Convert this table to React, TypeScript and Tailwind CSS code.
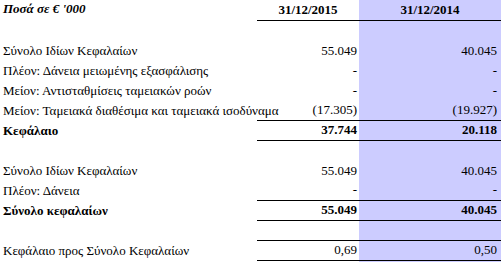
import React from 'react';

type Row = {
  label?: string;
  a?: string;
  b?: string;
  bold?: boolean;
  line?: boolean;
};

const rows: Row[] = [
  {},
  { label: 'Σύνολο Ιδίων Κεφαλαίων', a: '55.049', b: '40.045' },
  { label: 'Πλέον: Δάνεια μειωμένης εξασφάλισης', a: '-', b: '-' },
  { label: 'Μείον: Αντισταθμίσεις ταμειακών ροών', a: '-', b: '-' },
  { label: 'Μείον: Ταμειακά διαθέσιμα και ταμειακά ισοδύναμα', a: '(17.305)', b: '(19.927)', line: true },
  { label: 'Κεφάλαιο', a: '37.744', b: '20.118', bold: true, line: true },
  {},
  { label: 'Σύνολο Ιδίων Κεφαλαίων', a: '55.049', b: '40.045' },
  { label: 'Πλέον: Δάνεια', a: '-', b: '-', line: true },
  { label: 'Σύνολο κεφαλαίων', a: '55.049', b: '40.045', bold: true, line: true },
  { line: true },
  { label: 'Κεφάλαιο προς Σύνολο Κεφαλαίων', a: '0,69', b: '0,50', line: true },
];

export default function App() {
  return (
    <div className="w-[501px] h-[262px] bg-white text-black overflow-hidden [font-family:'Liberation_Serif',serif] text-[13px] leading-none">
      <div className="grid grid-cols-[257px_102px_142px]">
        {/* Header */}
        <div className="h-[21px] flex items-end pl-[3px] pb-[6px] font-bold italic">Ποσά σε € '000</div>
        <div className="h-[21px] flex items-end justify-center pb-[4px] font-bold border-b border-black">31/12/2015</div>
        <div className="h-[21px] flex items-end justify-center pb-[4px] font-bold border-b border-black bg-[#ccccff]">31/12/2014</div>

        {rows.map((r, i) => (
          <React.Fragment key={i}>
            <div className={`h-5 flex items-end pl-[3px] pb-[4px] whitespace-nowrap ${r.bold ? 'font-bold' : ''}`}>
              {r.label}
            </div>
            <div className={`h-5 flex items-end justify-end pr-[2px] pb-[4px] ${r.bold ? 'font-bold' : ''} ${r.line ? 'border-b border-black' : ''}`}>
              {r.a}
            </div>
            <div className={`h-5 flex items-end justify-end pr-[4px] pb-[4px] bg-[#ccccff] ${r.bold ? 'font-bold' : ''} ${r.line ? 'border-b border-black' : ''}`}>
              {r.b}
            </div>
          </React.Fragment>
        ))}
        <div className="h-[2px]" />
        <div className="h-[2px]" />
        <div className="h-[2px] bg-[#ccccff]" />
      </div>
    </div>
  );
}
